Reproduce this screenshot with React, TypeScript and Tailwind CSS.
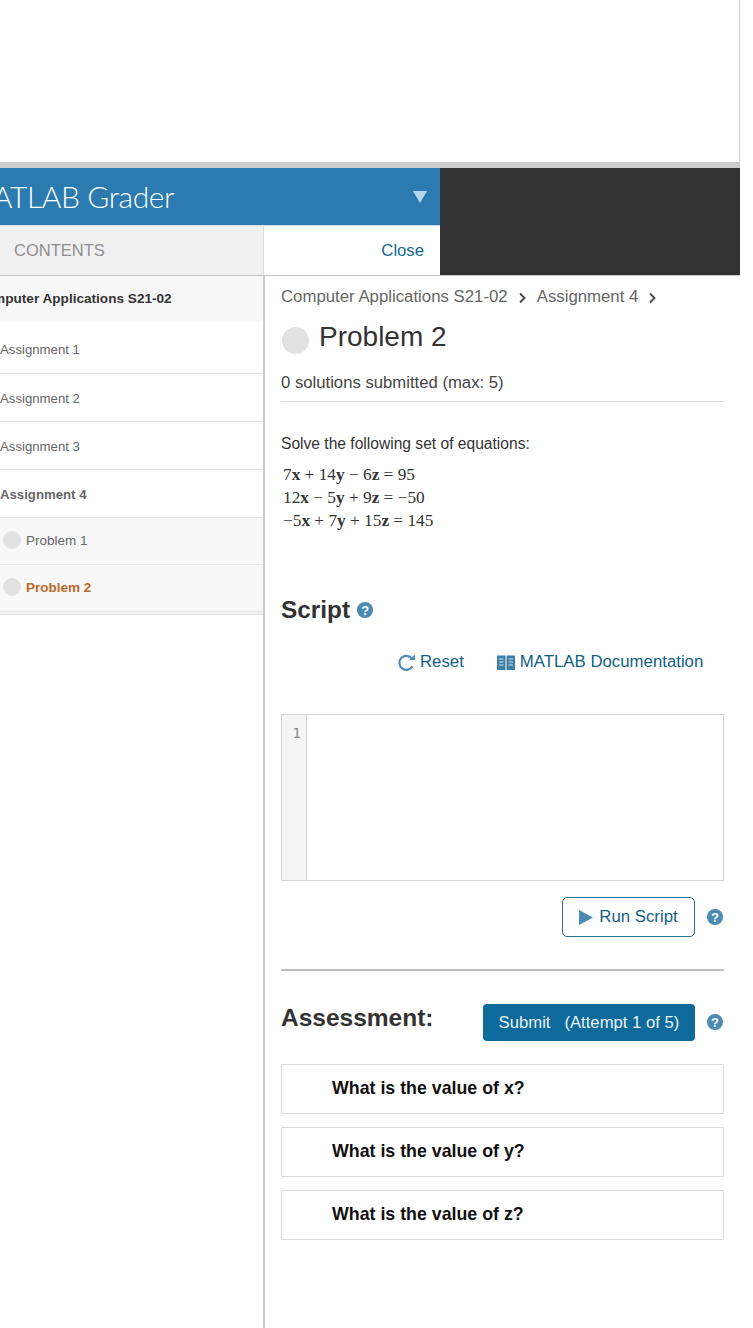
import React from "react";

const FONT = "font-['Liberation_Sans',Arial,sans-serif]";

function HelpIcon() {
  return (
    <span className="flex h-[16px] w-[16px] shrink-0 items-center justify-center rounded-full bg-[#4a8ab5] text-[13px] font-bold leading-none text-white">
      ?
    </span>
  );
}

function Dot({ size }: { size: string }) {
  return <span className={`${size} block shrink-0 rounded-full bg-[#e2e2e2]`} />;
}

function Chevron() {
  return (
    <svg width="9" height="12" viewBox="0 0 9 12" className="mt-[2px] shrink-0">
      <path d="M2 1.5 6.5 6 2 10.5" fill="none" stroke="#444" strokeWidth="1.8" />
    </svg>
  );
}

function Question({ text }: { text: string }) {
  return (
    <div className="flex h-[50px] items-center border border-[#dcdcdc] pl-[50px] text-[17.8px] font-bold text-[#111]">
      {text}
    </div>
  );
}

function SideItem({ label, bold, first }: { label: string; bold?: boolean; first?: boolean }) {
  return (
    <div
      className={`flex items-center border-b border-[#e2e2e2] text-[13.2px] text-[#666] ${first ? "h-[52px] pt-[5px]" : "h-[48px] pt-[2px]"} ${bold ? "font-bold" : ""}`}
    >
      {label}
    </div>
  );
}

export default function App() {
  return (
    <div className={`${FONT} h-[1328px] w-[753px] overflow-hidden bg-white`}>
      {/* blank area above the embedded grader */}
      <div className="h-[162px] w-[740px] border-r border-[#cfcfcf]" />
      <div className="h-[6px] w-[740px] bg-[#cccccc]" />

      <div className="flex h-[108px] w-[740px] border-b border-[#c4c4c4] bg-[#333333]">
        <div className="w-[440px]">
          <div className="flex h-[58px] items-center justify-between overflow-hidden border-b border-[#cfe0ec] bg-[#2b7bb0] pr-[12px]">
            <span className="ml-[-34px] mt-[-2px] whitespace-nowrap font-['Lato',sans-serif] text-[30px] font-light leading-none tracking-[-0.4px] text-white">
              MATLAB Grader
            </span>
            <svg width="16" height="13" viewBox="0 0 16 13">
              <path d="M1 1h14L8 13z" fill="#b5d6ec" />
            </svg>
          </div>
          <div className="flex h-[49px]">
            <div className="flex w-[263px] items-center bg-[#f0f0f0] pl-[14px] text-[16.5px] text-[#8f8f8f]">
              CONTENTS
            </div>
            <div className="flex flex-1 items-center justify-end border-l border-[#dcdcdc] bg-white pr-[16px] text-[16.7px] text-[#0f6a94]">
              Close
            </div>
          </div>
        </div>
      </div>

      <div className="flex">
        {/* contents sidebar */}
        <aside className="h-[1052px] w-[265px] shrink-0 border-r-2 border-[#cdcdcd]">
          <div className="flex h-[46px] items-center overflow-hidden whitespace-nowrap bg-[#f7f7f7] text-[13.6px] font-bold text-[#333]">
            <span className="ml-[-25px]">Computer Applications S21-02</span>
          </div>
          <SideItem label="Assignment 1" first />
          <SideItem label="Assignment 2" />
          <SideItem label="Assignment 3" />
          <SideItem label="Assignment 4" bold />
          <div className="flex h-[47px] items-center gap-[5px] border-b border-[#e8e8e8] bg-[#f8f8f8] pl-[3px] text-[13.5px] text-[#666]">
            <Dot size="mb-[2px] h-[18px] w-[18px]" />
            Problem 1
          </div>
          <div className="flex h-[47px] items-center gap-[5px] border-b border-[#e4e4e4] bg-[#f8f8f8] pl-[3px] text-[13.5px] font-bold text-[#bb6a2a]">
            <Dot size="mb-[2px] h-[18px] w-[18px]" />
            Problem 2
          </div>
          <div className="h-[3px] border-b border-[#e4e4e4] bg-[#f4f4f4]" />
        </aside>

        {/* problem panel */}
        <main className="w-[459px] shrink-0 pl-[16px]">
          <div className="flex h-[40px] items-center gap-[10px] pt-[2px] text-[16.8px] text-[#666]">
            <span>Computer Applications S21-02</span>
            <Chevron />
            <span>Assignment 4</span>
            <Chevron />
          </div>
          <div className="flex h-[44px] items-center gap-[10px] pl-[1px]">
            <Dot size="mt-[4px] h-[27px] w-[27px]" />
            <span className="mt-[-2px] text-[28px] leading-none text-[#333]">Problem 2</span>
          </div>
          <div className="mt-[11px] border-b border-[#dcdcdc] pb-[6px] text-[16.7px] leading-[24px] text-[#444]">
            0 solutions submitted (max: 5)
          </div>
          <p className="mt-[31px] text-[15.6px] leading-[22px] text-[#333]">Solve the following set of equations:</p>
          <div className="mt-[8px] pl-[2px] font-['Liberation_Serif',serif] text-[17.3px] leading-[23px] text-[#333]">
            <div>7<b>x</b> + 14<b>y</b> − 6<b>z</b> = 95</div>
            <div>12<b>x</b> − 5<b>y</b> + 9<b>z</b> = −50</div>
            <div>−5<b>x</b> + 7<b>y</b> + 15<b>z</b> = 145</div>
          </div>

          <div className="mt-[62px] flex items-center gap-[7px]">
            <span className="text-[24.4px] font-bold leading-[32px] text-[#333]">Script</span>
            <HelpIcon />
          </div>
          <div className="mt-[20px] flex h-[32px] items-center text-[16.8px] text-[#0f5f85]">
            <svg width="18" height="18" viewBox="0 0 18 18" className="ml-[117px] mt-[2px]">
              <path d="M14.5 12.2A7 7 0 1 1 14 4.6" fill="none" stroke="#4a8ab5" strokeWidth="2.2" />
              <path d="M11 6h6V.5z" fill="#4a8ab5" />
            </svg>
            <span className="ml-[4px]">Reset</span>
            <svg width="18" height="17" viewBox="0 0 18 17" className="ml-[33px] mt-[1px]">
              <path d="M0 1.5h8.5v14.5H0zM9.5 1.5H18v14.5H9.5z" fill="#3d7fa8" />
              <path d="M2 5h4.5M2 8h4.5M2 11h4.5M11.5 5H16M11.5 8H16M11.5 11H16" stroke="#cfe2ee" strokeWidth="1" />
            </svg>
            <span className="ml-[5px]">MATLAB Documentation</span>
          </div>

          <div className="mt-[36px] flex h-[167px] w-[443px] border border-[#d4d4d4]">
            <div className="w-[25px] border-r border-[#d4d4d4] bg-[#f5f5f5] pr-[5px] pt-[8px] text-right font-['DejaVu_Sans_Mono',monospace] text-[14px] text-[#888]">
              1
            </div>
          </div>

          <div className="mt-[16px] flex items-center justify-end gap-[12px] pr-[1px]">
            <div className="flex h-[40px] w-[133px] items-center justify-center gap-[6px] rounded-[5px] border border-[#2a6f93] text-[16.8px] text-[#0f5f85]">
              <svg width="14" height="15" viewBox="0 0 14 15">
                <path d="M0 0l14 7.5L0 15z" fill="#4a8ab5" />
              </svg>
              Run Script
            </div>
            <HelpIcon />
          </div>

          <div className="mt-[32px] h-[2px] w-[443px] bg-[#bdbdbd]" />

          <div className="mt-[29px] flex items-center justify-end gap-[12px] pr-[1px]">
            <span className="mb-[8px] mr-auto text-[24.5px] font-bold text-[#333]">Assessment:</span>
            <div className="flex h-[37px] w-[212px] items-center justify-center whitespace-pre rounded-[4px] bg-[#0f6a9c] text-[16.7px] text-[#e8f2f8]">
              Submit   (Attempt 1 of 5)
            </div>
            <HelpIcon />
          </div>

          <div className="mt-[19px] flex w-[443px] flex-col gap-[13px]">
            <Question text="What is the value of x?" />
            <Question text="What is the value of y?" />
            <Question text="What is the value of z?" />
          </div>
        </main>
      </div>
    </div>
  );
}
